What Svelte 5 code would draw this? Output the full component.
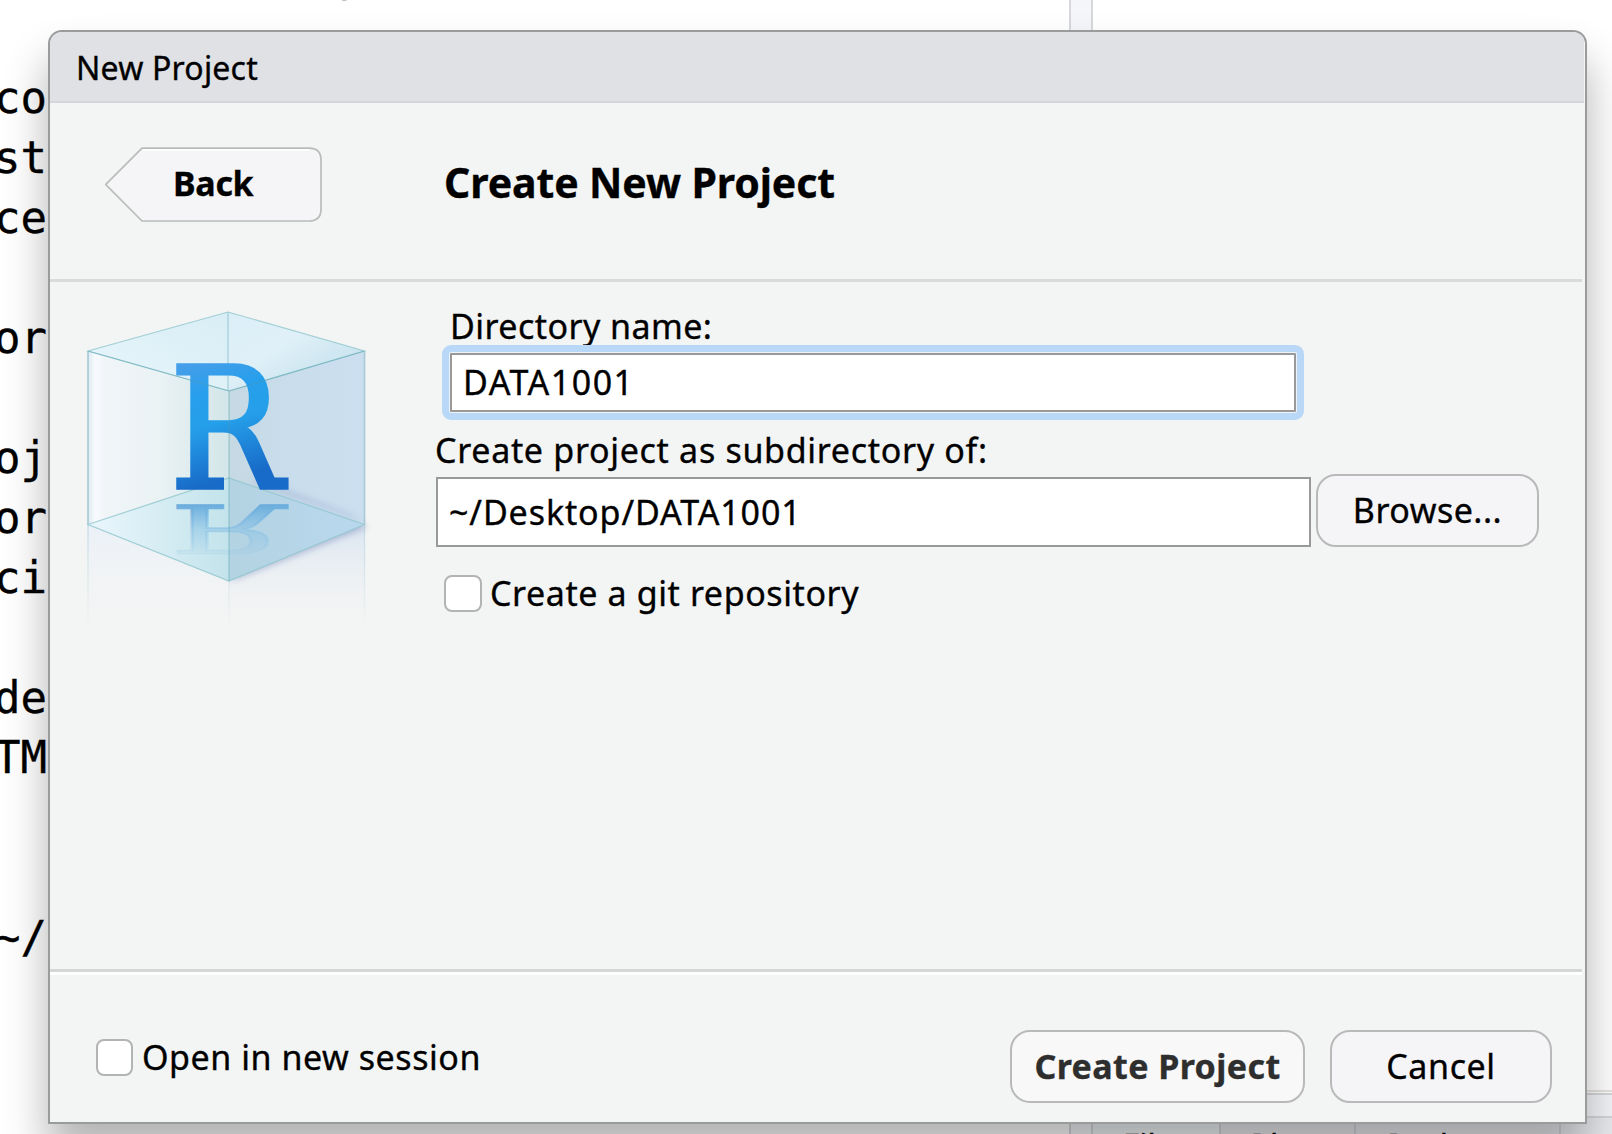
<script>
  const codeLines = ['', 'com', 'st', 'ce', '', 'ort', '', 'oj', 'or', 'cit', '', 'dem', 'TM', '', '', '~/'];
  const tabs = ['Files', 'Plots', 'Packages'];
  let directory = $state('DATA1001');
  let parent = $state('~/Desktop/DATA1001');
  let useGit = $state(false);
  let newSession = $state(false);
</script>

<main class="screen">
  <div class="editor">
    <div class="line first">{'             y'}</div>
    <div class="code">
      {#each codeLines as line}<div class="line">{line}</div>{/each}
    </div>
  </div>
  <div class="splitter"></div>
  <div class="side">
    <div class="pane"></div>
    <div class="gap"></div>
    <div class="tabs">
      {#each tabs as tab, i}<div class="tab tab{i}">{tab}</div>{/each}
    </div>
  </div>

  <section class="dialog">
    <header>New Project</header>

    <div class="toolbar">
      <button class="back">
        <svg viewBox="0 0 218 76">
          <path d="M37 1.200H204Q216 1.200 216 13V62Q216 74 204 74H37L.800 37.500Z" fill="#f5f5f8" stroke="#b9bcbb" stroke-width="1.700" />
          <path d="M38 3H204" stroke="#fff" stroke-width="1.500" />
        </svg>
        <span>Back</span>
      </button>
      <h1>Create New Project</h1>
    </div>

    <div class="body">
      <svg class="logo" viewBox="60 290 340 360">
        <defs>
          <linearGradient id="topL" x1="0" y1="1" x2="1" y2="0"><stop offset="0" stop-color="#e8f6fb" /><stop offset="1" stop-color="#d8edf5" /></linearGradient>
          <linearGradient id="topR" x1="0" y1="0" x2="1" y2="1"><stop offset="0" stop-color="#dbeef7" /><stop offset=".4" stop-color="#e0f0f8" /><stop offset="1" stop-color="#b9dce8" /></linearGradient>
          <linearGradient id="left" x1="0" y1="0" x2="1" y2="0"><stop offset="0" stop-color="#dcebf2" /><stop offset=".05" stop-color="#f8fafe" /><stop offset=".12" stop-color="#f0f5f8" /><stop offset=".5" stop-color="#eaf2f4" /><stop offset="1" stop-color="#d3e6e9" /></linearGradient>
          <linearGradient id="right" x1="0" y1="0" x2="1" y2="0"><stop offset="0" stop-color="#c5d9e3" /><stop offset=".5" stop-color="#cadded" /><stop offset="1" stop-color="#ccdff0" /></linearGradient>
          <linearGradient id="floorL" x1="0" y1="0" x2="1" y2="0"><stop offset="0" stop-color="#eaf6fc" /><stop offset="1" stop-color="#c3e3eb" /></linearGradient>
          <linearGradient id="floorR" x1="0" y1="0" x2="1" y2="0"><stop offset="0" stop-color="#b3d3e2" /><stop offset="1" stop-color="#b9d8ee" /></linearGradient>
          <linearGradient id="mirrorL" x1="0" y1="524" x2="0" y2="632" gradientUnits="userSpaceOnUse"><stop offset="0" stop-color="#ebf1f8" /><stop offset="1" stop-color="#f3f4f4" stop-opacity="0" /></linearGradient>
          <linearGradient id="mirrorR" x1="0" y1="524" x2="0" y2="632" gradientUnits="userSpaceOnUse"><stop offset="0" stop-color="#d9e5f1" /><stop offset="1" stop-color="#f3f4f4" stop-opacity="0" /></linearGradient>
          <linearGradient id="mirrorEdge" x1="0" y1="524" x2="0" y2="630" gradientUnits="userSpaceOnUse"><stop offset="0" stop-color="#b5d3dd" /><stop offset="1" stop-color="#b5d3dd" stop-opacity="0" /></linearGradient>
          <linearGradient id="ink" x1="0" y1="-124" x2="30" y2="0" gradientUnits="userSpaceOnUse"><stop offset="0" stop-color="#4b9ee9" /><stop offset=".3" stop-color="#279fec" /><stop offset=".55" stop-color="#259fe9" /><stop offset="1" stop-color="#186bc8" /></linearGradient>
          <linearGradient id="faint" x1="0" y1="-124" x2="0" y2="0" gradientUnits="userSpaceOnUse"><stop offset="0" stop-color="#8cc3e4" stop-opacity=".1" /><stop offset=".5" stop-color="#86bfe4" stop-opacity=".5" /><stop offset="1" stop-color="#6aaddd" /></linearGradient>
          <filter id="soft" x="-20%" y="-20%" width="140%" height="140%"><feGaussianBlur stdDeviation="3" /></filter>
        </defs>
        <path d="M88 524.500L229 581V632H88Z" fill="url(#mirrorL)" />
        <path d="M229 581L364.500 524.500V632H229Z" fill="url(#mirrorR)" />
        <path d="M88 525V630M229 581V630M364.500 525V630" stroke="url(#mirrorEdge)" stroke-width="1.300" opacity=".7" />
        <path d="M229 581L367 526L300 500Z" transform="translate(1 1)" fill="#8d9cc4" opacity=".6" filter="url(#soft)" />
        <path d="M88 351L229 391V581L88 524.500Z" fill="url(#left)" />
        <path d="M229 391L364.500 351V524.500L229 581Z" fill="url(#right)" />
        <path d="M250 482L364 522L350 514L260 480Z" fill="#8fa3c8" opacity=".5" filter="url(#soft)" />
        <path d="M88 351L228 312L229 391Z" fill="url(#topL)" />
        <path d="M228 312L364.500 351L229 391Z" fill="url(#topR)" />
        <path d="M88 524.500L229 478V581Z" fill="url(#floorL)" />
        <path d="M229 478L364.500 524.500L229 581Z" fill="url(#floorR)" />
        <path d="M88 351L228 312L364.500 351L229 391ZM228 312V391M88 524.500L229 478L364.500 524.500L229 581Z" fill="none" stroke="#8fc6cd" stroke-width="1.200" opacity=".8" />
        <path d="M88 351V524.500M364.500 351V524.500" stroke="#a8cad7" stroke-width="1.700" />
        <g transform="translate(169.500 487.500) scale(.9 1)" class="letter"><text fill="url(#ink)" stroke="url(#ink)">R</text></g>
        <g transform="translate(169.500 505) scale(.9 -.4)" class="letter"><text fill="url(#faint)" stroke="url(#faint)">R</text></g>
        <path d="M88 351L229 391L364.500 351M229 391V581" fill="none" stroke="#4a9cab" stroke-width="1.200" opacity=".4" />
      </svg>

      <form class="form">
        <label class="caption indent" for="dir">Directory name:</label>
        <input id="dir" class="field focused" bind:value={directory} />
        <label class="caption second" for="parent">Create project as subdirectory of:</label>
        <div class="row">
          <input id="parent" class="field path" bind:value={parent} />
          <button type="button" class="btn browse">Browse...</button>
        </div>
        <label class="check git"><input type="checkbox" bind:checked={useGit} /><span>Create a git repository</span></label>
      </form>
    </div>

    <footer>
      <label class="check session"><input type="checkbox" bind:checked={newSession} /><span>Open in new session</span></label>
      <button class="btn primary">Create Project</button>
      <button class="btn cancel">Cancel</button>
    </footer>
  </section>
</main>

<style>
  :global(body) { overflow: hidden; }
  * { box-sizing: border-box; }
  .screen { width: 1612px; height: 1134px; position: relative; background: #fff; overflow: hidden; display: flex; color: #000; font: 34px/44px "Noto Sans", "Open Sans", sans-serif; -webkit-text-stroke: .35px; }

  .editor { width: 1069px; flex: none; font: 44px/60px "DejaVu Sans Mono", monospace; overflow: hidden; }
  .line { height: 60px; margin-left: -6px; white-space: pre; }
  .first { margin: -54px 0 2px -6px; }
  .code { width: 50px; overflow: hidden; }
  .splitter { width: 24px; flex: none; background: #f4f6f9; border: solid #d6d8dc; border-width: 0 2px; }
  .side { flex: 1; display: flex; flex-direction: column; }
  .pane { height: 1092px; flex: none; border-bottom: 2px solid #e6e3df; }
  .gap { height: 25px; flex: none; margin-top: 1px; border: solid #d3d5d9; border-width: 2px 0; background: #f3f4f8; }
  .tabs { display: flex; height: 60px; flex: none; background: #e8e9ed; font-size: 32px; line-height: 56px; text-align: center; }
  .tab { border-right: 2px solid #d3d5d9; }
  .tab0 { width: 128px; background: #f0f5f6; }
  .tab1 { width: 135px; }
  .tab2 { width: 205px; }

  .dialog { position: absolute; left: 48px; top: 30px; width: 1539px; height: 1094px; border: 2px solid #999c9b; background: #f3f4f4; box-shadow: 0 30px 44px rgba(0, 0, 0, .3); border-radius: 14px 14px 0 0; display: flex; flex-direction: column; overflow: hidden; }
  header { height: 71px; flex: none; padding: 1px 0 0 26px; margin-right: 1px; background: #e0e1e5; border-bottom: 2px solid #d5d7dc; font-size: 32px; line-height: 69px; letter-spacing: .2px; }
  .toolbar { height: 179px; flex: none; margin-right: 3px; padding: 44px 0 0 55px; display: flex; align-items: flex-start; gap: 121px; border-bottom: 3px solid #d9dbdb; }
  button { font: inherit; color: inherit; }
  .back { display: grid; width: 218px; height: 76px; padding: 0; border: 0; background: none; text-align: left; }
  .back > * { grid-area: 1 / 1; }
  .back span { margin: 14px 0 0 68px; font-weight: 700; letter-spacing: -.3px; }
  h1 { margin: 9px 0 0; font-size: 41px; line-height: 52px; letter-spacing: -.1px; }

  .body { height: 687px; flex: none; display: flex; padding-left: 10px; }
  .logo { width: 340px; height: 360px; margin-top: 8px; flex: none; }
  .letter text { font: 168px "DejaVu Serif", serif; stroke-width: 3.5px; }
  .form { padding: 22px 0 0 36px; display: flex; flex-direction: column; align-items: flex-start; }
  .caption { height: 44px; letter-spacing: .45px; }
  .indent { margin-left: 14px; }
  .second { margin: 16px 0 0 -1px; letter-spacing: .7px; }
  .field { font: inherit; color: #000; background: #fff; border: 2px solid #999; border-radius: 0; outline: none; }
  .focused { width: 846px; height: 59px; margin: 5px 0 0 14px; padding: 0 11px 1px; letter-spacing: 1.5px; box-shadow: 0 0 0 1px #eef3f8; outline: 7px solid #b9d8f7; outline-offset: 1px; border-radius: 1px; }
  .row { display: flex; align-items: flex-end; gap: 5px; margin-top: 2px; }
  .path { width: 875px; height: 70px; padding: 0 11px 1px; letter-spacing: .9px; }
  .btn { height: 73px; padding: 0 0 1px; border: 2px solid #b9b9ba; border-radius: 20px; background: #f5f5f8; }
  .browse { width: 223px; letter-spacing: .5px; }
  .check { display: flex; align-items: center; height: 44px; }
  .check input { appearance: none; margin: 0; width: 37px; height: 37px; border: 2px solid #b2b3b4; border-radius: 8px; background: #fff; }
  .git { margin: 24px 0 0 8px; gap: 8px; letter-spacing: .6px; }
  .git input { width: 38px; }

  footer { flex: 1; margin-right: 3px; border-top: 3px solid #d4d7d6; box-shadow: inset 0 3px #fff; display: flex; align-items: flex-start; padding: 58px 30px 0 46px; }
  .session { margin: 5px auto 0 0; gap: 9px; letter-spacing: .55px; }
  .primary { width: 295px; font-weight: 700; color: #2e2e2e; background: #f8f8f8; letter-spacing: .4px; margin-right: 25px; }
  .cancel { width: 222px; letter-spacing: .6px; }
</style>
